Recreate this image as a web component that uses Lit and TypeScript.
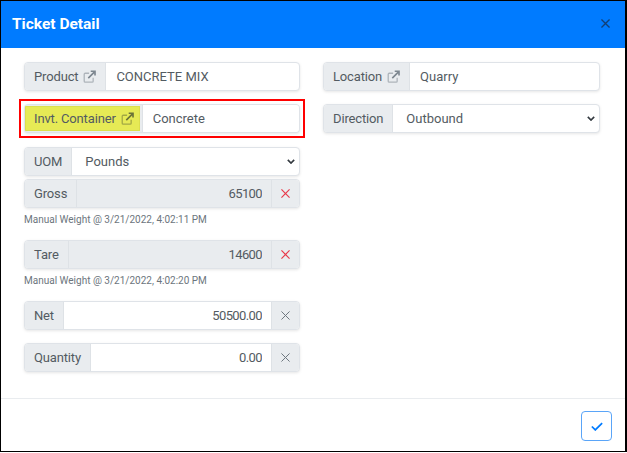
import { LitElement, css, html, nothing } from "lit";
import { customElement } from "lit/decorators.js";

const linkIcon = html`<svg class="link" viewBox="0 0 16 16" width="13" height="13" fill="none" stroke="currentColor" stroke-width="1.6">
    <path d="M7.5 4H2.8A1.3 1.3 0 0 0 1.5 5.3v8.4A1.3 1.3 0 0 0 2.8 15h8.4a1.3 1.3 0 0 0 1.3-1.3V9.5" opacity="0.55" />
    <path d="M6.5 10 14.5 2M9.5 1.5h5.3v5.3" stroke-width="2" />
</svg>`;

const chevron = html`<svg class="chevron" viewBox="0 0 10 6" width="8" height="5" fill="none" stroke="#343a40" stroke-width="2">
    <path d="M1 1l4 4 4-4" />
</svg>`;

const times = html`<svg viewBox="0 0 10 10" width="9" height="9" fill="none" stroke="currentColor" stroke-width="1.1">
    <path d="M.5.5l9 9M9.5.5l-9 9" />
</svg>`;

@customElement("app-root")
class AppRoot extends LitElement {
    static styles = css`
        :host {
            display: block;
            width: 627px;
            height: 453px;
            box-sizing: border-box;
            background: #fff;
            color: #535b62;
            font-family: Roboto, "Open Sans", sans-serif;
            font-size: 13px;
        }

        .modal {
            width: 627px;
            height: 452px;
            box-sizing: border-box;
            border: solid #000;
            border-width: 1px 2px 1px 1px;
            display: flex;
            flex-direction: column;
        }

        .header {
            height: 47px;
            box-sizing: border-box;
            flex: none;
            background: #007bff;
            color: #fff;
            display: flex;
            align-items: center;
            justify-content: space-between;
            padding: 0 15px 1px 11px;
            font-size: 15.5px;
            font-weight: 700;
        }

        .close {
            color: #123f75;
            display: flex;
            margin-top: -2px;
        }

        .close svg {
            stroke-width: 1.5;
        }

        .body {
            flex: 1;
            display: grid;
            grid-template-columns: 276px 277px;
            column-gap: 23px;
            align-items: start;
            padding: 14px 0 0 23px;
        }

        .col {
            display: flex;
            flex-direction: column;
        }

        .group {
            display: flex;
            height: 29px;
            box-sizing: border-box;
            border: 1px solid #dfe3e8;
            border-radius: 4px;
            box-shadow: 0 1px 3px rgba(0, 0, 0, 0.1);
            overflow: hidden;
            background: #fff;
        }

        .label {
            flex: none;
            display: flex;
            align-items: center;
            gap: 5px;
            padding: 0 9px;
            background: #e9ecef;
            border-right: 1px solid #dee2e6;
            letter-spacing: -0.15px;
        }

        .link {
            color: #7d8790;
        }

        .field {
            flex: 1;
            min-width: 0;
            border: none;
            outline: none;
            padding: 0 10px;
            background: transparent;
            color: inherit;
            font: inherit;
        }

        .field.num {
            text-align: right;
            padding-right: 9px;
            letter-spacing: -0.6px;
        }

        .field.locked {
            background: #e9ecef;
        }

        .select-wrap {
            flex: 1;
            position: relative;
            display: flex;
        }

        select.field {
            appearance: none;
            padding-left: 13px;
        }

        .chevron {
            position: absolute;
            right: 4px;
            top: 11px;
            pointer-events: none;
        }

        .clear {
            flex: none;
            width: 27px;
            display: flex;
            align-items: center;
            justify-content: center;
            background: #e9ecef;
            border-left: 1px solid #dee2e6;
            color: #6c757d;
        }

        .clear.danger {
            color: #e8394a;
        }

        .clear.danger svg {
            stroke-width: 1.3;
        }

        .note {
            font-size: 10px;
            color: #6c757d;
            margin-top: 5px;
            line-height: 13px;
        }

        .gap-3 {
            height: 3px;
        }

        .gap-13 {
            height: 13px;
        }

        .gap-14 {
            height: 14px;
        }

        .highlight {
            margin: 8px -5px 9px;
            padding: 3px;
            border: 2px solid #f00;
        }

        .highlight .group {
            background: #e9ecef;
        }

        .highlight .label {
            background: #e6ea55;
            border: 1px solid #dcdf4c;
            margin: 1px 2px 1px 0;
            padding: 0 5px 0 8px;
        }

        .highlight .field {
            background: #fff;
            border-left: 1px solid #dee2e6;
        }

        .highlight .link {
            color: #6b7338;
        }

        .footer {
            height: 53px;
            box-sizing: border-box;
            flex: none;
            border-top: 1px solid #e9ecef;
            display: flex;
            justify-content: flex-end;
            align-items: flex-start;
            padding: 12px 13px 0 0;
        }

        .ok {
            width: 31px;
            height: 30px;
            box-sizing: border-box;
            padding: 0;
            border: 1px solid #5aa5f8;
            border-radius: 4px;
            background: #fff;
            color: #007bff;
            display: flex;
            align-items: center;
            justify-content: center;
        }
    `;

    private renderField(
        label: string,
        value: string,
        opts: { link?: boolean; locked?: boolean; clear?: "danger" | "plain" } = {},
    ) {
        return html`<div class="group">
            <span class="label">${label}${opts.link ? linkIcon : nothing}</span>
            <input
                class="field ${opts.clear ? "num" : ""} ${opts.locked ? "locked" : ""}"
                .value=${value}
                ?readonly=${opts.locked}
            />
            ${opts.clear
                ? html`<span class="clear ${opts.clear === "danger" ? "danger" : ""}">${times}</span>`
                : nothing}
        </div>`;
    }

    private renderSelect(label: string, value: string) {
        return html`<div class="group">
            <span class="label">${label}</span>
            <div class="select-wrap">
                <select class="field"><option>${value}</option></select>
                ${chevron}
            </div>
        </div>`;
    }

    protected render() {
        return html`
            <div class="modal">
                <div class="header">
                    <span>Ticket Detail</span>
                    <span class="close">${times}</span>
                </div>
                <div class="body">
                    <div class="col">
                        ${this.renderField("Product", "CONCRETE MIX", { link: true })}
                        <div class="highlight">${this.renderField("Invt. Container", "Concrete", { link: true })}</div>
                        ${this.renderSelect("UOM", "Pounds")}
                        <div class="gap-3"></div>
                        ${this.renderField("Gross", "65100", { locked: true, clear: "danger" })}
                        <div class="note">Manual Weight @ 3/21/2022, 4:02:11 PM</div>
                        <div class="gap-14"></div>
                        ${this.renderField("Tare", "14600", { locked: true, clear: "danger" })}
                        <div class="note">Manual Weight @ 3/21/2022, 4:02:20 PM</div>
                        <div class="gap-14"></div>
                        ${this.renderField("Net", "50500.00", { clear: "plain" })}
                        <div class="gap-13"></div>
                        ${this.renderField("Quantity", "0.00", { clear: "plain" })}
                    </div>
                    <div class="col">
                        ${this.renderField("Location", "Quarry", { link: true })}
                        <div class="gap-13"></div>
                        ${this.renderSelect("Direction", "Outbound")}
                    </div>
                </div>
                <div class="footer">
                    <button class="ok">
                        <svg viewBox="0 0 14 10" width="12" height="9" fill="none" stroke="currentColor" stroke-width="2">
                            <path d="M1 5l4 4 8-8" />
                        </svg>
                    </button>
                </div>
            </div>
        `;
    }
}

declare global {
    interface HTMLElementTagNameMap {
        "app-root": AppRoot;
    }
}
